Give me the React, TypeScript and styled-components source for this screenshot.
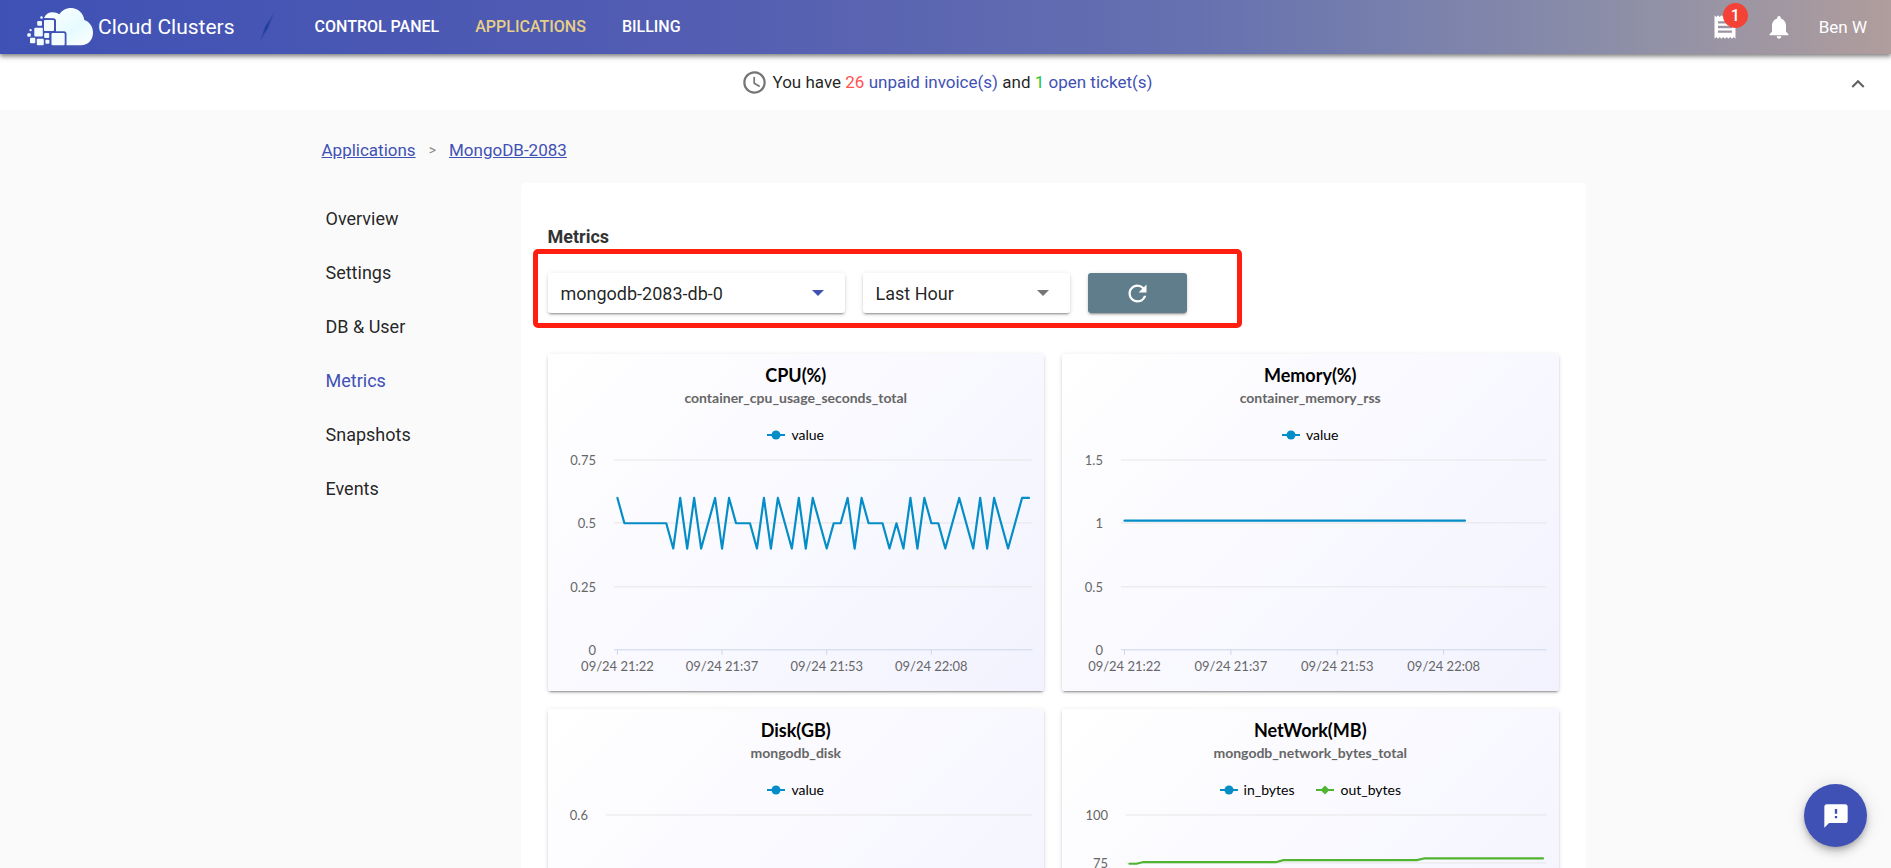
import React from 'react';
import styled, { createGlobalStyle } from 'styled-components';
import {
  MdAccessTime,
  MdExpandLess,
  MdFeedback,
  MdNotifications,
  MdReceipt,
  MdRefresh,
} from 'react-icons/md';

const GlobalStyle = createGlobalStyle`
  *, *::before, *::after { box-sizing: border-box; }
  html { scrollbar-width: none; }
  body {
    margin: 0;
    background: #fafafa;
    color: rgba(0, 0, 0, 0.87);
    font-family: Roboto, "Liberation Sans", sans-serif;
    font-size: 17px;
    line-height: 24px;
  }
  a { color: #3f51b5; }
`;

/* ---------- Header ---------- */

const Header = styled.header`
  position: relative;
  display: flex;
  align-items: center;
  height: 54px;
  padding: 0 24px 0 27px;
  color: #fff;
  background: linear-gradient(
    to right,
    #3f51b5 0%,
    #535db2 37%,
    #6571b0 63%,
    #8b8ea8 85%,
    #b09d9d 100%
  );
  box-shadow: 0 2px 4px rgba(0, 0, 0, 0.4), 0 4px 5px rgba(0, 0, 0, 0.14);
`;

const Brand = styled.a`
  display: flex;
  align-items: center;
  gap: 5px;
  color: #fff;
  font-size: 21px;
  text-decoration: none;
`;

const Slash = styled.svg`
  margin-left: 20px;
`;

const Nav = styled.nav`
  display: flex;
  gap: 36px;
  margin-left: 36px;
`;

const NavLink = styled.a<{ $active?: boolean }>`
  color: ${(p) => (p.$active ? '#e6cf86' : '#fff')};
  font-size: 16px;
  font-weight: 500;
  line-height: 26px;
  text-decoration: none;
`;

const Account = styled.div`
  display: flex;
  align-items: center;
  gap: 26px;
  margin-left: auto;
`;

const IconButton = styled.button`
  position: relative;
  display: flex;
  padding: 0;
  border: 0;
  background: none;
  color: inherit;
  font: inherit;
  cursor: pointer;
`;

const Badge = styled.span`
  position: absolute;
  top: -10px;
  left: 12px;
  width: 25px;
  height: 25px;
  border-radius: 50%;
  background: #f44336;
  font-size: 16px;
  font-weight: 500;
  line-height: 25px;
  text-align: center;
`;

/* ---------- Notice ---------- */

const Notice = styled.div`
  display: grid;
  grid-template-columns: 1fr 26px;
  align-items: center;
  height: 56px;
  padding: 0 20px 0 48px;
  background: #fff;
`;

const NoticeText = styled.p`
  display: flex;
  align-items: center;
  justify-content: center;
  gap: 5px;
  margin: 0;
  svg { color: #757575; }
  a { text-decoration: none; }
`;

const Count = styled.span<{ $tone: 'bad' | 'good' }>`
  color: ${(p) => (p.$tone === 'bad' ? '#ff5252' : '#1fc52b')};
`;

const Collapse = styled(IconButton)`
  justify-content: center;
  padding-top: 4px;
  color: #616161;
`;

/* ---------- Page ---------- */

const Page = styled.main`
  max-width: 1280px;
  margin: 0 auto;
  padding-top: 28px;
`;

const Breadcrumbs = styled.nav`
  display: flex;
  align-items: center;
  margin-bottom: 21px;
  padding-left: 16px;
`;

const Separator = styled.span`
  padding: 0 13px;
  color: #888;
  font-size: 14px;
`;

const Columns = styled.div`
  display: grid;
  grid-template-columns: 215px minmax(0, 1fr);
  align-items: start;
`;

const Sidebar = styled.nav`
  display: flex;
  flex-direction: column;
  padding: 9px 0 0 20px;
`;

const SideLink = styled.a<{ $active?: boolean }>`
  color: ${(p) => (p.$active ? '#3f51b5' : 'rgba(0, 0, 0, 0.87)')};
  font-size: 18px;
  line-height: 54px;
  text-decoration: none;
`;

const Panel = styled.section`
  padding: 42px 27px 27px;
  border-radius: 4px;
  background: #fff;
`;

const PanelTitle = styled.h1`
  margin: 0;
  color: #333;
  font-size: 18px;
  font-weight: 700;
  line-height: 24px;
`;

const Filters = styled.form`
  display: flex;
  gap: 18px;
  width: fit-content;
  margin: 0 -15px 26px;
  padding: 19px 50px 10px 10px;
  border: 5px solid #ff1e10;
  border-radius: 5px;
`;

const raised = `
  border-radius: 3px;
  box-shadow: 0 3px 1px -2px rgba(0, 0, 0, 0.2), 0 2px 2px rgba(0, 0, 0, 0.14),
    0 1px 5px rgba(0, 0, 0, 0.12);
`;

const SelectBox = styled.label<{ $width: number; $focused?: boolean }>`
  display: grid;
  align-items: center;
  width: ${(p) => p.$width}px;
  height: 40px;
  background: #fff;
  ${raised}

  select,
  svg {
    grid-area: 1 / 1;
  }
  select {
    width: 100%;
    height: 40px;
    padding: 0 36px 0 13px;
    border: 0;
    appearance: none;
    background: none;
    color: rgba(0, 0, 0, 0.87);
    font: 18px Roboto, "Liberation Sans", sans-serif;
  }
  svg {
    justify-self: end;
    margin-right: 21px;
    color: ${(p) => (p.$focused ? '#3f51b5' : '#757575')};
    pointer-events: none;
  }
`;

const RefreshButton = styled.button`
  display: flex;
  align-items: center;
  justify-content: center;
  width: 99px;
  height: 40px;
  padding: 0;
  border: 0;
  background: #607d8b;
  color: #fff;
  ${raised}
`;

/* ---------- Charts ---------- */

const ChartGrid = styled.div`
  display: grid;
  grid-template-columns: repeat(2, minmax(0, 1fr));
  gap: 18px;
`;

const Card = styled.article`
  padding-top: 9px;
  background: linear-gradient(135deg, #fff 0, #f0f0ff 707px);
  font-family: "Trebuchet MS", Lato, sans-serif;
  text-align: center;
  ${raised}
`;

const ChartTitle = styled.h2`
  margin: 0 0 2px;
  color: #000;
  font-size: 18px;
  font-weight: 700;
  line-height: 24px;
`;

const Subtitle = styled.p`
  margin: 0 0 19px;
  color: #666;
  font-size: 14px;
  font-weight: 700;
  line-height: 18px;
`;

const Legend = styled.ul`
  display: flex;
  justify-content: center;
  gap: 22px;
  margin: 0;
  padding: 0;
  color: #000;
  font-size: 14px;
  line-height: 18px;
  list-style: none;
`;

const LegendItem = styled.li`
  display: flex;
  align-items: center;
  gap: 6px;
`;

const Plot = styled.svg`
  display: block;
  width: 100%;
  height: auto;
  text {
    fill: #666;
    font-size: 13px;
  }
`;

type Series = { name: string; color: string; values: number[] };
type ChartSpec = {
  title: string;
  subtitle: string;
  ticks: string[];
  left: number;
  series: Series[];
};

const BLUE = '#058dc7';
const GREEN = '#50b432';
const POINTS = 60;
const TIMES = ['09/24 21:22', '09/24 21:37', '09/24 21:53', '09/24 22:08'];
const RIGHT = 485;
const TOP = 16;
const BOTTOM = 206;

const flat = (n: number, v: number): number[] => Array(n).fill(v);

/* Turning points of the CPU curve: minute, tenths of a percent. */
const cpuKeys: [number, number][] = [
  [0, 6], [1, 5], [7, 5], [8, 4], [9, 6], [10, 4], [11, 6], [12, 4], [14, 6], [15, 4],
  [16, 6], [17, 5], [19, 5], [20, 4], [21, 6], [22, 4], [23, 6], [25, 4], [26, 6], [27, 4],
  [28, 6], [30, 4], [31, 5], [32, 5], [33, 6], [34, 4], [35, 6], [36, 5], [38, 5], [39, 4],
  [40, 5], [41, 4], [42, 6], [43, 4], [44, 6], [45, 5], [46, 5], [47, 4], [49, 6], [51, 4],
  [52, 6], [53, 4], [54, 6], [56, 4], [58, 6], [59, 6],
];

/* Expands turning points into one value per minute. */
const expand = (keys: [number, number][]): number[] =>
  Array.from({ length: POINTS }, (_, i) => {
    const next = keys.findIndex(([x]) => x >= i);
    const [x1, y1] = keys[next];
    if (x1 === i) return y1 / 10;
    const [x0, y0] = keys[next - 1];
    return (y0 + ((y1 - y0) * (i - x0)) / (x1 - x0)) / 10;
  });

const CHARTS: ChartSpec[] = [
  {
    title: 'CPU(%)',
    subtitle: 'container_cpu_usage_seconds_total',
    ticks: ['0', '0.25', '0.5', '0.75'],
    left: 66,
    series: [{ name: 'value', color: BLUE, values: expand(cpuKeys) }],
  },
  {
    title: 'Memory(%)',
    subtitle: 'container_memory_rss',
    ticks: ['0', '0.5', '1', '1.5'],
    left: 59,
    series: [{ name: 'value', color: BLUE, values: flat(49, 1.02) }],
  },
  {
    title: 'Disk(GB)',
    subtitle: 'mongodb_disk',
    ticks: ['0', '0.2', '0.4', '0.6'],
    left: 58,
    series: [{ name: 'value', color: BLUE, values: flat(60, 0.3) }],
  },
  {
    title: 'NetWork(MB)',
    subtitle: 'mongodb_network_bytes_total',
    ticks: ['0', '25', '50', '75', '100'],
    left: 64,
    series: [
      { name: 'in_bytes', color: BLUE, values: flat(60, 12) },
      {
        name: 'out_bytes',
        color: GREEN,
        values: [...flat(2, 74.3), ...flat(20, 75.2), ...flat(20, 76.2), ...flat(18, 77.1)],
      },
    ],
  },
];

function Marker({ color, diamond }: { color: string; diamond: boolean }) {
  return (
    <svg width="18" height="12" aria-hidden="true">
      <path d="M0 6H18" stroke={color} strokeWidth="2" />
      {diamond ? (
        <path d="M9 1.5L13.5 6L9 10.5L4.5 6Z" fill={color} />
      ) : (
        <circle cx="9" cy="6" r="4.5" fill={color} />
      )}
    </svg>
  );
}

function Chart({ title, subtitle, ticks, left, series }: ChartSpec) {
  const max = Number(ticks[ticks.length - 1]);
  const y = (v: number) => BOTTOM - (v / max) * (BOTTOM - TOP);
  const x = (i: number) => left + ((i + 0.5) * (RIGHT - left)) / POINTS;
  return (
    <Card>
      <ChartTitle>{title}</ChartTitle>
      <Subtitle>{subtitle}</Subtitle>
      <Legend>
        {series.map((s, i) => (
          <LegendItem key={s.name}>
            <Marker color={s.color} diamond={i === 1} />
            {s.name}
          </LegendItem>
        ))}
      </Legend>
      <Plot viewBox="0 0 497 247" role="img" aria-label={title}>
        {ticks.map((t) => {
          const ty = Math.round(y(Number(t)));
          return (
            <g key={t}>
              <path
                d={`M${left} ${ty}H${RIGHT}`}
                stroke={t === '0' ? '#ccd6eb' : '#e6e6e6'}
              />
              <text x={left - 18} y={ty + 5} textAnchor="end">
                {t}
              </text>
            </g>
          );
        })}
        {TIMES.map((t, i) => (
          <g key={t}>
            <path d={`M${x(i * 15)} ${BOTTOM}v5`} stroke="#ccd6eb" />
            <text x={x(i * 15)} y={BOTTOM + 21} textAnchor="middle">
              {t}
            </text>
          </g>
        ))}
        {series.map((s) => (
          <polyline
            key={s.name}
            points={s.values.map((v, i) => `${x(i)},${y(v)}`).join(' ')}
            fill="none"
            stroke={s.color}
            strokeWidth="2.2"
            strokeLinejoin="round"
            strokeLinecap="round"
          />
        ))}
      </Plot>
    </Card>
  );
}

/* ---------- Logo, feedback ---------- */

const BLOCKS: [number, number, number, number][] = [
  [17, 12, 10, 11],
  [24.5, 25, 13.2, 12.3],
  [7.3, 19.7, 8.5, 8.7],
  [10.2, 13, 4.8, 4.8],
  [13.3, 8.3, 2.4, 2.4],
  [2.5, 21, 2.2, 2.2],
  [0.3, 25.3, 3.5, 3.5],
  [17.2, 25, 5, 5],
  [3, 29.7, 5.3, 5.6],
  [9.8, 30.7, 7, 6.6],
  [18.4, 31.7, 4, 4],
];

function Logo() {
  return (
    <svg width="66" height="38" viewBox="0 0 66 38" aria-hidden="true">
      <defs>
        <linearGradient id="cloud" x1="0" y1="0" x2="1" y2="1">
          <stop offset="0" stopColor="#fff" />
          <stop offset="0.6" stopColor="#e6fbff" />
          <stop offset="1" stopColor="#fff" />
        </linearGradient>
      </defs>
      <path
        fill="url(#cloud)"
        d="M17 10C19 6 22 4.3 25.5 4.3C28 4.3 30.5 5 32.5 6.3C34.5 2.5 39 0 44 0C51 0 56.5 5 57.3 12C62.500 13.8 66 18.5 66 24.5C66 32 61 37.3 54 37.3H39.5V26C39.5 24.3 38.5 23.3 37 23.3H29V13C29 11.3 28 10.3 26.5 10.3Z"
      />
      {BLOCKS.map(([x, y, w, h]) => (
        <rect key={`${x}-${y}`} x={x} y={y} width={w} height={h} rx="1" fill="#f2fcff" />
      ))}
    </svg>
  );
}

const FeedbackButton = styled.button`
  position: fixed;
  right: 24px;
  bottom: 21px;
  display: flex;
  align-items: center;
  justify-content: center;
  width: 63px;
  height: 63px;
  padding: 0;
  border: 0;
  border-radius: 50%;
  background: #3f51b5;
  color: #fff;
  box-shadow: 0 3px 5px -1px rgba(0, 0, 0, 0.2), 0 6px 10px rgba(0, 0, 0, 0.14),
    0 1px 18px rgba(0, 0, 0, 0.12);
`;

function Arrow() {
  return (
    <svg width="12" height="6" viewBox="0 0 12 6" aria-hidden="true">
      <path d="M0 0H12L6 6Z" fill="currentColor" />
    </svg>
  );
}

const SECTIONS = ['Overview', 'Settings', 'DB & User', 'Metrics', 'Snapshots', 'Events'];

export default function App() {
  return (
    <>
      <GlobalStyle />
      <Header>
        <Brand href="#">
          <Logo />
          Cloud Clusters
        </Brand>
        <Slash width="24" height="40" viewBox="0 0 24 40" aria-hidden="true">
          <defs>
            <linearGradient id="slash" x1="0" y1="1" x2="0" y2="0">
              <stop offset="0" stopColor="#1f3c9c" stopOpacity="0" />
              <stop offset="0.5" stopColor="#1f3c9c" />
              <stop offset="1" stopColor="#1f3c9c" stopOpacity="0" />
            </linearGradient>
          </defs>
          <path d="M3 38L10.500 19L21 2L12.500 22Z" fill="url(#slash)" />
        </Slash>
        <Nav aria-label="Main">
          <NavLink href="#">CONTROL PANEL</NavLink>
          <NavLink href="#" $active>
            APPLICATIONS
          </NavLink>
          <NavLink href="#">BILLING</NavLink>
        </Nav>
        <Account>
          <IconButton type="button" aria-label="Invoices">
            <MdReceipt size={28} />
            <Badge>1</Badge>
          </IconButton>
          <IconButton type="button" aria-label="Notifications">
            <MdNotifications size={28} />
          </IconButton>
          <IconButton type="button">Ben W</IconButton>
        </Account>
      </Header>
      <Notice>
        <NoticeText>
          <MdAccessTime size={27} />
          <span>
            You have <Count $tone="bad">26</Count> <a href="#">unpaid invoice(s)</a> and{' '}
            <Count $tone="good">1</Count> <a href="#">open ticket(s)</a>
          </span>
        </NoticeText>
        <Collapse type="button" aria-label="Collapse">
          <MdExpandLess size={26} />
        </Collapse>
      </Notice>
      <Page>
        <Breadcrumbs aria-label="Breadcrumb">
          <a href="#">Applications</a>
          <Separator>&gt;</Separator>
          <a href="#">MongoDB-2083</a>
        </Breadcrumbs>
        <Columns>
          <Sidebar aria-label="Application">
            {SECTIONS.map((s) => (
              <SideLink key={s} href="#" $active={s === 'Metrics'}>
                {s}
              </SideLink>
            ))}
          </Sidebar>
          <Panel>
            <PanelTitle>Metrics</PanelTitle>
            <Filters>
              <SelectBox $width={297} $focused>
                <select aria-label="Instance">
                  <option>mongodb-2083-db-0</option>
                </select>
                <Arrow />
              </SelectBox>
              <SelectBox $width={207}>
                <select aria-label="Period">
                  <option>Last Hour</option>
                </select>
                <Arrow />
              </SelectBox>
              <RefreshButton type="button" aria-label="Refresh">
                <MdRefresh size={27} />
              </RefreshButton>
            </Filters>
            <ChartGrid>
              {CHARTS.map((c) => (
                <Chart key={c.title} {...c} />
              ))}
            </ChartGrid>
          </Panel>
        </Columns>
      </Page>
      <FeedbackButton type="button" aria-label="Feedback">
        <MdFeedback size={28} />
      </FeedbackButton>
    </>
  );
}
